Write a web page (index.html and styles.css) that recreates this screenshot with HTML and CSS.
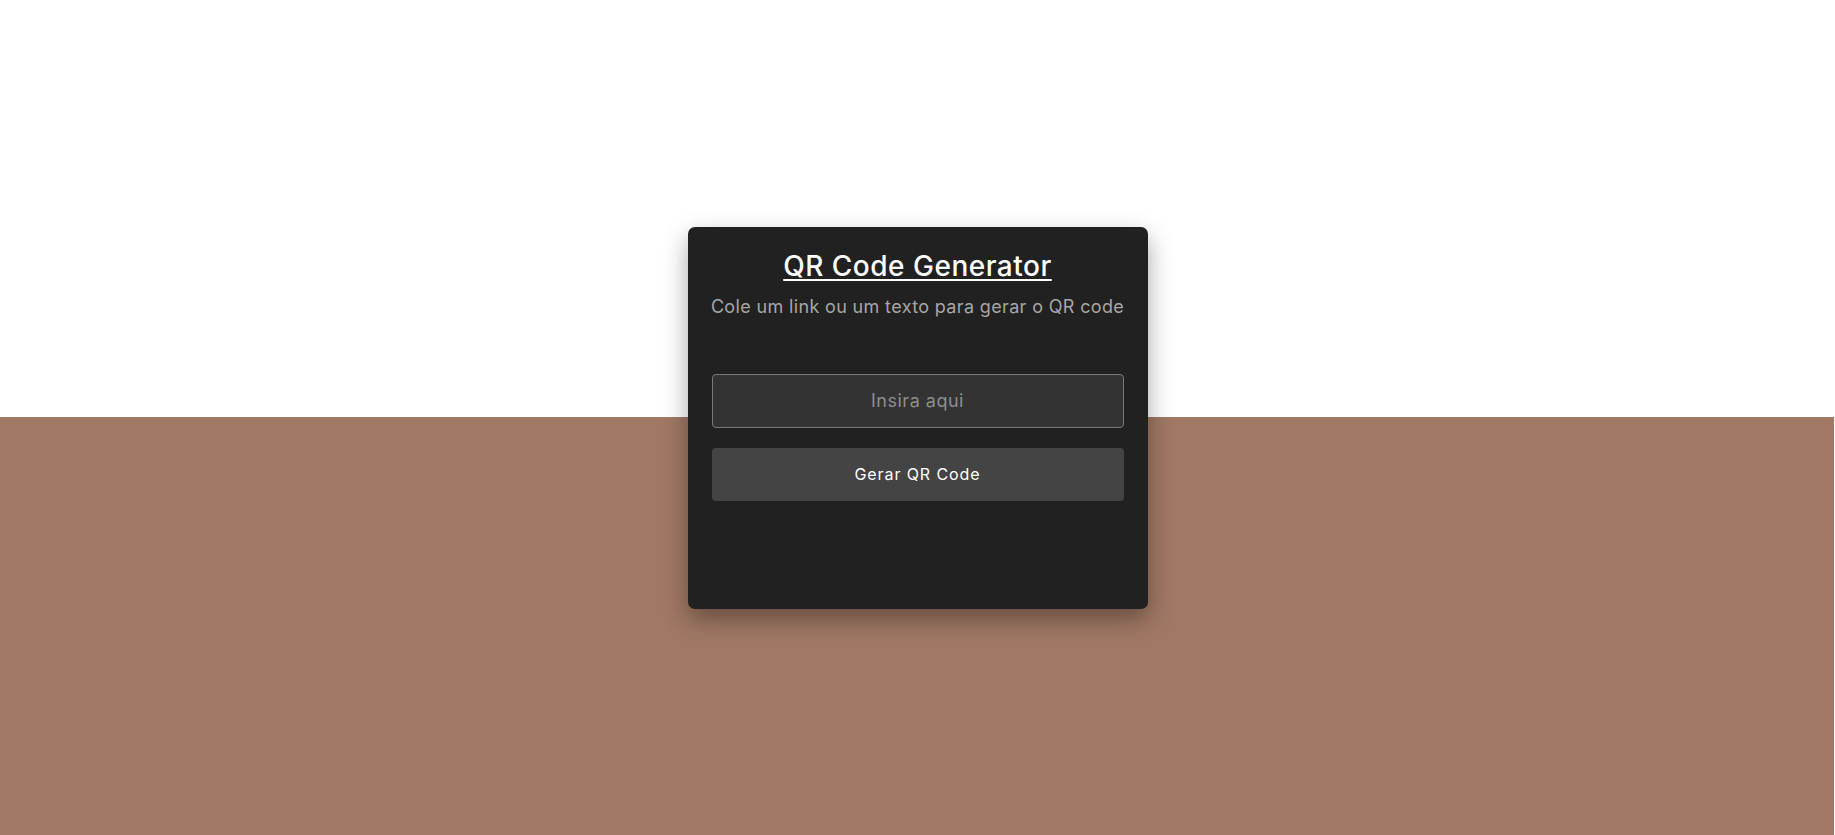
FILE: index.html
```html
<!DOCTYPE html>
<html lang="pt-BR">
<head>
<meta charset="utf-8">
<title>QR Code Generator</title>
<link rel="stylesheet" href="styles.css">
</head>
<body>
<main class="page">
  <section class="card">
    <h1 class="title">QR Code Generator</h1>
    <p class="subtitle">Cole um link ou um texto para gerar o QR code</p>
    <div class="form">
      <input class="field" type="text" placeholder="Insira aqui">
      <button class="btn" type="button">Gerar QR Code</button>
    </div>
  </section>
</main>
</body>
</html>
```

FILE: styles.css
```css
* { box-sizing: border-box; }
html, body { margin: 0; height: 100%; }
body {
  font-family: Inter, "Noto Sans", sans-serif;
  background: linear-gradient(to bottom, #ffffff 417px, #a07864 417px);
  background-size: calc(100% - 1px) 100%;
  background-repeat: no-repeat;
  background-color: #fff;
}
.page {
  height: 100vh;
  display: flex;
  align-items: center;
  justify-content: center;
}
.card {
  width: 460px;
  height: 382px;
  background: #212121;
  border-radius: 7px;
  box-shadow: 0 10px 25px rgba(0, 0, 0, 0.35);
  padding: 19px 24px 24px;
  display: flex;
  flex-direction: column;
  align-items: center;
}
.title {
  margin: 0;
  font-size: 28px;
  font-weight: 500;
  color: #ffffff;
  text-decoration: underline;
  text-decoration-thickness: 2px;
  text-underline-offset: 3px;
  line-height: 40px;
  letter-spacing: 0.5px;
}
.subtitle {
  margin: 7px 0 0;
  font-size: 18px;
  color: #a6a6a6;
  line-height: 27px;
  white-space: nowrap;
  letter-spacing: 0.35px;
}
.form {
  width: 100%;
  margin-top: 54px;
  display: flex;
  flex-direction: column;
  gap: 20px;
}
.field {
  width: 100%;
  height: 54px;
  background: #333333;
  border: 1px solid #7a7a7a;
  border-radius: 4px;
  color: #eee;
  font-family: inherit;
  font-size: 18px;
  letter-spacing: 0.5px;
  text-align: center;
  outline: none;
}
.field::placeholder { color: #8e8e8e; }
.btn {
  width: 100%;
  height: 53px;
  background: #444444;
  border: none;
  border-radius: 4px;
  color: #ffffff;
  font-family: inherit;
  font-size: 16px;
  font-weight: 400;
  letter-spacing: 0.9px;
}
```
